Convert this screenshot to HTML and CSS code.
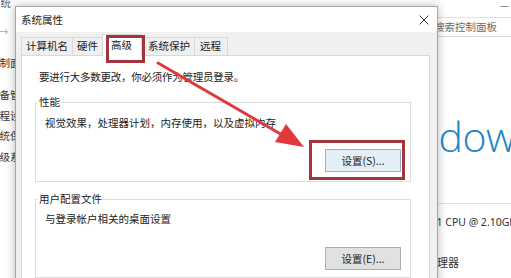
FILE: index.html
```html
<!DOCTYPE html>
<html lang="zh-CN">
<head>
<meta charset="utf-8">
<title>系统属性</title>
<link rel="stylesheet" href="styles.css">
</head>
<body>
<div class="screen">
  <div class="bgwin">
    <div class="bg-titlebar"><span class="bg-title">系统</span><span class="bg-min">—</span></div>
    <div class="bg-address">
      <span class="bg-arrow">→</span>
      <div class="bg-search">搜索控制面板</div>
    </div>
    <div class="bg-body">
      <nav class="bg-nav">
        <a class="nav-home">控制面板主页</a>
        <a>设备管理器</a>
        <a>远程设置</a>
        <a>系统保护</a>
        <a>高级系统设置</a>
      </nav>
      <main class="bg-main">
        <div class="win-logo">Windows 10</div>
        <div class="bg-rule"></div>
        <div class="cpu">Intel(R) Core(TM) i5-1021 CPU @ 2.10GHz</div>
        <div class="cpu-type">处理器</div>
      </main>
    </div>
  </div>

  <div class="dialog">
    <div class="dlg-title">
      <span class="dlg-caption">系统属性</span>
      <svg class="dlg-close" width="10" height="10" viewBox="0 0 10 10"><path d="M0.5 0.5L9.5 9.5M9.5 0.5L0.5 9.5" stroke="#333" stroke-width="1" fill="none"/></svg>
    </div>
    <div class="dlg-body">
      <div class="tabs">
        <span class="tab t1">计算机名</span>
        <span class="tab t2">硬件</span>
        <span class="tab t3 active">高级</span>
        <span class="tab t4">系统保护</span>
        <span class="tab t5">远程</span>
      </div>
      <div class="panel">
        <p class="intro">要进行大多数更改，你必须作为管理员登录。</p>
        <fieldset class="group g1">
          <legend>性能</legend>
          <p class="desc">视觉效果，处理器计划，内存使用，以及虚拟内存</p>
          <div class="btn-row"><button class="btn focus">设置(S)...</button></div>
        </fieldset>
        <fieldset class="group g2">
          <legend>用户配置文件</legend>
          <p class="desc">与登录帐户相关的桌面设置</p>
          <div class="btn-row"><button class="btn">设置(E)...</button></div>
        </fieldset>
      </div>
    </div>
  </div>

  <div class="mark mark-tab"></div>
  <div class="mark mark-btn"></div>
  <svg class="arrow" width="511" height="278" viewBox="0 0 511 278">
    <line x1="158" y1="63" x2="284" y2="136" stroke="#e0383b" stroke-width="3" stroke-linecap="round"/>
    <polygon points="304,147 275,142 286,124" fill="#e0383b"/>
  </svg>
</div>
</body>
</html>
```

FILE: styles.css
```css
* { box-sizing: border-box; }
html, body { margin: 0; padding: 0; }
body {
  width: 511px;
  height: 278px;
  overflow: hidden;
  background: #fff;
  font-family: "Noto Sans CJK SC", "Microsoft YaHei", sans-serif;
  font-size: 10.5px;
  color: #1a1a1a;
}
.screen {
  position: relative;
  width: 511px;
  height: 278px;
  overflow: hidden;
}

/* background control panel window */
.bgwin {
  width: 511px;
  height: 278px;
  background: #fff;
  color: #333;
}
.bg-titlebar {
  height: 14px;
  margin-top: -4px;
  display: flex;
  justify-content: space-between;
  line-height: 14px;
}
.bg-title { margin-left: -10px; color: #555; }
.bg-min { margin-right: 2px; color: #777; font-size: 10px; line-height: 18px; }
.bg-address {
  height: 38px;
  display: flex;
  align-items: flex-start;
  justify-content: space-between;
}
.bg-arrow { color: #aaa; margin-left: -2px; margin-top: 15px; line-height: 14px; }
.bg-search {
  width: 78px;
  height: 20px;
  margin-top: 7px;
  border-top: 1px solid #e3e3e3;
  border-bottom: 1px solid #d8d8d8;
  border-left: 1px solid #d8d8d8;
  padding-left: 0;
  line-height: 18px;
  color: #6a6a6a;
  white-space: nowrap;
}
.bg-body { display: flex; }
.bg-nav {
  width: 430px;
  display: flex;
  flex-direction: column;
  padding-top: 8px;
}
.bg-nav a {
  display: block;
  margin-left: -11px;
  line-height: 14px;
  height: 20.5px;
  color: #333;
  white-space: nowrap;
}
.bg-nav a.nav-home { height: 32px; }
.bg-main {
  flex: 1;
  min-width: 0;
  padding-top: 66px;
  white-space: nowrap;
}
.win-logo {
  font-family: "Open Sans", sans-serif;
  font-weight: 300;
  font-size: 41px;
  line-height: 44px;
  color: #1f86c5;
  margin-left: -60px;
  letter-spacing: -0.5px;
}
.bg-rule {
  height: 1px;
  background: #e2e2e2;
  margin-top: 45px;
}
.cpu {
  margin-top: 11px;
  margin-left: -109px;
  line-height: 14px;
  font-family: "Noto Sans", sans-serif;
  font-size: 10.5px;
  color: #333;
}
.cpu-type {
  margin-top: 26px;
  margin-left: -4px;
  line-height: 14px;
  color: #333;
  font-size: 11px;
}

/* dialog */
.dialog {
  position: absolute;
  left: 15px;
  top: 6px;
  width: 423px;
  height: 300px;
  background: #f0f0f0;
  border: 1px solid #a6a6a6;
  box-shadow: 0 0 9px rgba(0, 0, 0, 0.28);
  display: flex;
  flex-direction: column;
}
.dlg-title {
  height: 25px;
  background: #fff;
  display: flex;
  align-items: center;
  justify-content: space-between;
  padding: 0 8px 0 5px;
  flex: none;
}
.dlg-caption { line-height: 14px; color: #1a1a1a; }
.dlg-close { display: block; }
.dlg-body {
  flex: 1;
  padding: 0 7px 0 5px;
  display: flex;
  flex-direction: column;
}
.tabs {
  height: 23px;
  display: flex;
  align-items: flex-end;
  flex: none;
  position: relative;
  z-index: 1;
}
.tab {
  height: 18px;
  line-height: 16px;
  border: 1px solid #d9d9d9;
  border-bottom: none;
  margin-left: -1px;
  background: #f0f0f0;
  padding: 0 4px;
  white-space: nowrap;
}
.tab.t1 { margin-left: 0; }
.tab.t2 { padding: 0 5px 0 4px; }
.tab.active {
  line-height: 19px;
  background: #fff;
  margin: 0 -2px -1px -2px;
  padding: 0 9px 0 8px;
  position: relative;
  z-index: 2;
  height: 22px;
}
.tab.t4 { padding: 0 4px 0 8px; }
.tab.t5 { padding: 0 6px 0 5px; }
.panel {
  flex: 1;
  background: #fff;
  border: 1px solid #d9d9d9;
  padding: 14px 18px 0 13px;
}
.intro {
  margin: 0 0 11px 4px;
  line-height: 14px;
  white-space: nowrap;
  letter-spacing: -0.25px;
}
.group {
  margin: 0;
  border: 1px solid #dcdcdc;
  padding: 7px 9px 9px 9px;
  min-width: 0;
}
.group legend {
  padding: 0 1px;
  margin-left: -7px;
  line-height: 14px;
  color: #1a1a1a;
}
.desc {
  margin: 0;
  line-height: 14px;
  white-space: nowrap;
}
.btn-row {
  display: flex;
  justify-content: flex-end;
}
.g1 .btn-row { margin-top: 19px; }
.g2 { margin-top: 10px; padding-top: 6px; height: 86px; }
.g2 .btn-row { margin-top: 21px; }
.btn {
  width: 76px;
  height: 23px;
  padding: 0;
  font-family: inherit;
  font-size: 10.5px;
  color: #1a1a1a;
  background: #e1e1e1;
  border: 1px solid #adadad;
  border-radius: 0;
  line-height: 21px;
}
.btn.focus {
  background: #e4eef7;
  border-color: #8db2d3;
}

/* annotations */
.mark {
  position: absolute;
  border: 3px solid #a3343b;
  z-index: 5;
}
.mark-tab { left: 106px; top: 35px; width: 39px; height: 28px; }
.mark-btn { left: 309px; top: 140px; width: 96px; height: 40px; }
.arrow {
  position: absolute;
  left: 0;
  top: 0;
  z-index: 6;
}
```
